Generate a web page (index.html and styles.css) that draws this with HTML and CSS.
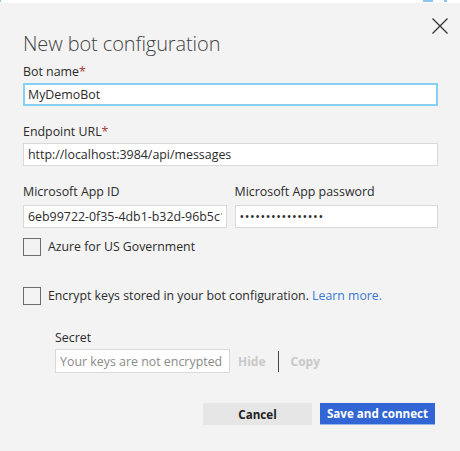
FILE: index.html
```html
<!DOCTYPE html>
<html>
<head>
<meta charset="utf-8">
<link rel="stylesheet" href="styles.css">
</head>
<body>
<div class="topstrip"><span class="bit bit-l"></span><span class="bit bit-a"></span><span class="bit bit-b"></span></div>
<div class="dialog">
  <button class="close" aria-label="Close">
    <svg width="16" height="16" viewBox="0 0 16 16"><path d="M0.5 0.5 L15.5 15.5 M15.5 0.5 L0.5 15.5" stroke="#333" stroke-width="1.3" fill="none"/></svg>
  </button>
  <h1 class="title">New bot configuration</h1>

  <label class="label lbl-first">Bot name<span class="req">*</span></label>
  <input class="input focused" type="text" value="MyDemoBot">

  <label class="label lbl-gap">Endpoint URL<span class="req">*</span></label>
  <input class="input" type="text" value="http://localhost:3984/api/messages">

  <div class="row">
    <div class="col">
      <label class="label">Microsoft App ID</label>
      <input class="input" type="text" value="6eb99722-0f35-4db1-b32d-96b5c1a2f0e7">
    </div>
    <div class="col">
      <label class="label">Microsoft App password</label>
      <input class="input pw" type="password" value="abcdefghijklmnop">
    </div>
  </div>

  <div class="check check-azure"><span class="box"></span><span>Azure for US Government</span></div>

  <div class="check check-encrypt"><span class="box"></span><span>Encrypt keys stored in your bot configuration. <a class="link">Learn more.</a></span></div>

  <div class="secret">
    <label class="label">Secret</label>
    <div class="secret-row">
      <input class="input secret-input" type="text" placeholder="Your keys are not encrypted">
      <span class="action act-hide">Hide</span>
      <span class="sep"></span>
      <span class="action act-copy">Copy</span>
    </div>
  </div>

  <div class="buttons">
    <button class="btn btn-cancel">Cancel</button>
    <button class="btn btn-primary">Save and connect</button>
  </div>
</div>
</body>
</html>
```
FILE: styles.css
```css
html, body {
  margin: 0;
  padding: 0;
  background: #f3f3f3;
  font-family: "Open Sans", "Noto Sans", sans-serif;
  color: #2b2b2b;
}
.topstrip {
  height: 3px;
  background: #ffffff;
  position: relative;
}
.bit { position: absolute; top: 0; height: 2px; background: #8cc4ee; }
.bit-l { left: 0; width: 1px; }
.bit-a { left: 423px; width: 10px; }
.bit-b { left: 444px; width: 3px; }
.dialog {
  position: relative;
  padding: 0 22px 0 23px;
  display: flex;
  flex-direction: column;
  align-items: stretch;
}
.close {
  position: absolute;
  top: 15px;
  right: 12px;
  border: 0;
  background: transparent;
  padding: 0;
  width: 16px;
  height: 16px;
  display: flex;
}
.title {
  margin: 27px 0 0 0;
  font-size: 20px;
  font-weight: 300;
  color: #444;
  line-height: 28px;
  letter-spacing: -0.1px;
}
.label {
  display: block;
  font-size: 12.4px;
  line-height: 17px;
  height: 17px;
  color: #2b2b2b;
  margin: 0 0 3px 0;
}
.lbl-first { margin-top: 5px; }
.lbl-gap { margin-top: 17px; }
.req { color: #a4373a; }
.input {
  box-sizing: border-box;
  display: block;
  height: 23px;
  border: 1px solid #dadada;
  background: #fff;
  font-family: inherit;
  font-size: 12.4px;
  color: #2b2b2b;
  padding: 0 4px;
  margin: 0;
  outline: none;
  width: 100%;
}
.input.focused {
  border: 2px solid #86d1f3;
  padding: 0 3px;
}
.pw { letter-spacing: 0.6px; }
.row {
  display: grid;
  grid-template-columns: 1fr 1fr;
  column-gap: 8px;
  margin-top: 17px;
}
.row .label { margin-bottom: 5px; }
.check {
  display: flex;
  align-items: center;
  gap: 7px;
  font-size: 12.3px;
  line-height: 18px;
  height: 18px;
}
.box {
  box-sizing: border-box;
  width: 18px;
  height: 18px;
  border: 1px solid #6d6d6d;
  background: #f3f3f3;
  flex: none;
}
.check-azure { margin-top: 10px; }
.check-encrypt { margin-top: 31px; }
.link { color: #3a78d4; }
.secret {
  margin-left: 32px;
  margin-top: 24px;
}
.secret .label { margin: 0 0 3px 0; }
.secret-row {
  display: flex;
  align-items: center;
  height: 24px;
}
.secret-input {
  width: 175px;
  height: 24px;
  flex: none;
}
.secret-input::placeholder { color: #8a8a8a; }
.action {
  font-size: 12px;
  font-weight: 700;
  color: #c8c8c8;
}
.act-hide { margin-left: 8px; }
.sep {
  width: 1px;
  height: 21px;
  background: #444;
  margin-left: 12px;
  margin-right: 12px;
}
.buttons {
  display: flex;
  justify-content: flex-end;
  gap: 8px;
  margin-top: 30px;
  margin-right: 3px;
}
.btn {
  height: 22px;
  border: 0;
  font-family: inherit;
  font-size: 11.6px;
  font-weight: 700;
  padding: 0;
}
.btn-cancel {
  width: 109px;
  background: #e6e6e6;
  color: #222;
}
.btn-primary {
  width: 115px;
  background: #3166d4;
  color: #fff;
  border-bottom: 1px solid #9ab5ea;
}
```
